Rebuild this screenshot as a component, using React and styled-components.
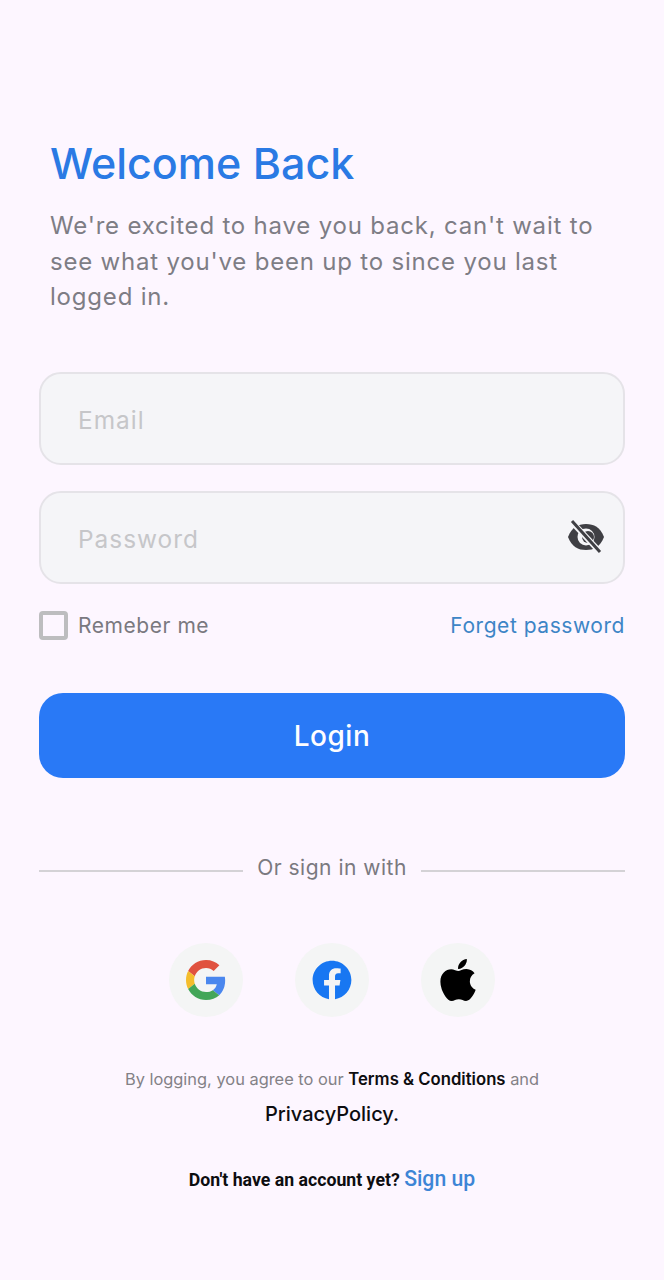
import React from 'react';
import styled, { createGlobalStyle } from 'styled-components';
import { FaFacebook, FaApple } from 'react-icons/fa';

const GlobalStyle = createGlobalStyle`
  html, body {
    margin: 0;
    padding: 0;
    background: #fdf6ff;
  }
  * {
    box-sizing: border-box;
  }
`;

const Page = styled.div`
  width: 664px;
  height: 1280px;
  padding: 136px 39px 0;
  background: #fdf6ff;
  font-family: Inter, "Liberation Sans", sans-serif;
`;

const Intro = styled.div`
  padding: 0 12px 0 11px;
  margin-bottom: 57px;
`;

const Title = styled.h1`
  margin: 0 0 18px;
  font-size: 43px;
  line-height: 54px;
  font-weight: 500;
  color: #2a7ae4;
`;

const Subtitle = styled.p`
  margin: 0;
  font-size: 24px;
  line-height: 35.5px;
  letter-spacing: 0.8px;
  color: #7e7d85;
`;

const Field = styled.div`
  display: flex;
  align-items: center;
  justify-content: space-between;
  height: 93px;
  margin-bottom: ${(p) => p.$gap}px;
  padding: 3px 19px 0 37px;
  background: #f5f5f8;
  border: 2px solid #e5e3e8;
  border-radius: 22px;
  font-size: 24.4px;
  letter-spacing: 1px;
  color: #c6c6c9;
`;

const Eye = styled.svg`
  margin-top: -3px;
`;

const OptionsRow = styled.div`
  display: flex;
  align-items: center;
  justify-content: space-between;
  height: 30px;
  margin-top: 27px;
  font-size: 21px;
  letter-spacing: 0.55px;
`;

const Remember = styled.div`
  display: flex;
  align-items: center;
  gap: 10px;
  color: #7a797f;
`;

const Box = styled.span`
  width: 29px;
  height: 29px;
  border: 4px solid #bdbdbf;
  border-radius: 4px;
`;

const Forgot = styled.span`
  color: #3d85c6;
`;

const LoginButton = styled.button`
  display: block;
  width: 100%;
  height: 85px;
  margin-top: 52px;
  padding: 2px 0 0;
  border: 0;
  border-radius: 24px;
  background: #2979f6;
  color: #fdfdff;
  font: 500 28px Inter, "Liberation Sans", sans-serif;
  letter-spacing: 0.5px;
`;

const Divider = styled.div`
  display: flex;
  align-items: center;
  gap: 14px;
  margin-top: 75px;
  font-size: 21px;
  line-height: 30px;
  letter-spacing: 0.5px;
  color: #7a797f;
`;

const Rule = styled.span`
  flex: 1;
  height: 2px;
  margin-top: 7px;
  background: #d4d2d6;
`;

const Socials = styled.div`
  display: flex;
  justify-content: center;
  gap: 52px;
  margin-top: 60px;
`;

const SocialButton = styled.div`
  display: flex;
  align-items: center;
  justify-content: center;
  width: 74px;
  height: 74px;
  border-radius: 50%;
  background: #f4f5f5;
  font-size: ${(p) => p.$size}px;
  color: ${(p) => p.$color};
`;

const Terms = styled.p`
  margin: 52px 0 0;
  text-align: center;
  font-size: 16.4px;
  line-height: 20px;
  color: #838186;
`;

const TermsLink = styled.strong`
  font-size: 16.7px;
  font-weight: 600;
  color: #0d0d10;
`;

const Privacy = styled.p`
  margin: 12px 0 0;
  text-align: center;
  font-size: 20px;
  line-height: 26px;
  font-weight: 500;
  color: #0d0d10;
`;

const SignupLine = styled.p`
  margin: 38px 0 0;
  text-align: center;
  font-family: Roboto, "Liberation Sans", sans-serif;
  font-size: 17.7px;
  line-height: 28px;
  font-weight: 700;
  color: #0d0d10;
`;

const SignupLink = styled.span`
  font-size: 21.2px;
  font-weight: 500;
  color: #3d85d6;
`;

function EyeOff() {
  return (
    <Eye width="36" height="34" viewBox="0 0 36 34">
      <path d="M0 17C4 7 10 4 18 4s14 3 18 13c-4 10-10 13-18 13S4 27 0 17z" fill="#3f3f44" />
      <circle cx="18" cy="17" r="8.5" fill="#f5f5f8" />
      <circle cx="20" cy="17" r="6" fill="#3f3f44" />
      <path d="M5 3l26 28" stroke="#f5f5f8" strokeWidth="6" />
      <path d="M4 1l28 31" stroke="#3f3f44" strokeWidth="3" />
    </Eye>
  );
}

function GoogleMark() {
  return (
    <svg width="40" height="40" viewBox="0 0 48 48">
      <path fill="#e0523f" d="M24 9.5c3.54 0 6.71 1.22 9.21 3.6l6.85-6.85C35.9 2.38 30.47 0 24 0 14.62 0 6.51 5.38 2.56 13.22l7.98 6.19C12.43 13.72 17.74 9.5 24 9.5z" />
      <path fill="#4a87ee" d="M46.98 24.55c0-1.57-.15-3.09-.38-4.55H24v9.02h12.94c-.58 2.96-2.26 5.48-4.78 7.18l7.73 6c4.51-4.18 7.09-10.36 7.09-17.65z" />
      <path fill="#f4bd2c" d="M10.53 28.59c-.48-1.45-.76-2.99-.76-4.59s.27-3.14.76-4.59l-7.98-6.19C.92 16.46 0 20.12 0 24c0 3.88.92 7.54 2.56 10.78l7.97-6.19z" />
      <path fill="#43a658" d="M24 48c6.48 0 11.93-2.13 15.89-5.81l-7.73-6c-2.15 1.45-4.92 2.3-8.16 2.3-6.26 0-11.57-4.22-13.47-9.91l-7.98 6.19C6.51 42.62 14.62 48 24 48z" />
    </svg>
  );
}

export default function App() {
  return (
    <Page>
      <GlobalStyle />
      <Intro>
        <Title>Welcome Back</Title>
        <Subtitle>We're excited to have you back, can't wait to see what you've been up to since you last logged in.</Subtitle>
      </Intro>
      <Field $gap={26}>Email</Field>
      <Field $gap={0}>
        Password
        <EyeOff />
      </Field>
      <OptionsRow>
        <Remember>
          <Box />
          Remeber me
        </Remember>
        <Forgot>Forget password</Forgot>
      </OptionsRow>
      <LoginButton>Login</LoginButton>
      <Divider>
        <Rule />
        Or sign in with
        <Rule />
      </Divider>
      <Socials>
        <SocialButton><GoogleMark /></SocialButton>
        <SocialButton $size={40} $color="#1877f2"><FaFacebook /></SocialButton>
        <SocialButton $size={48} $color="#000"><FaApple /></SocialButton>
      </Socials>
      <Terms>
        By logging, you agree to our <TermsLink>Terms &amp; Conditions</TermsLink> and
      </Terms>
      <Privacy>PrivacyPolicy.</Privacy>
      <SignupLine>
        Don't have an account yet? <SignupLink>Sign up</SignupLink>
      </SignupLine>
    </Page>
  );
}
